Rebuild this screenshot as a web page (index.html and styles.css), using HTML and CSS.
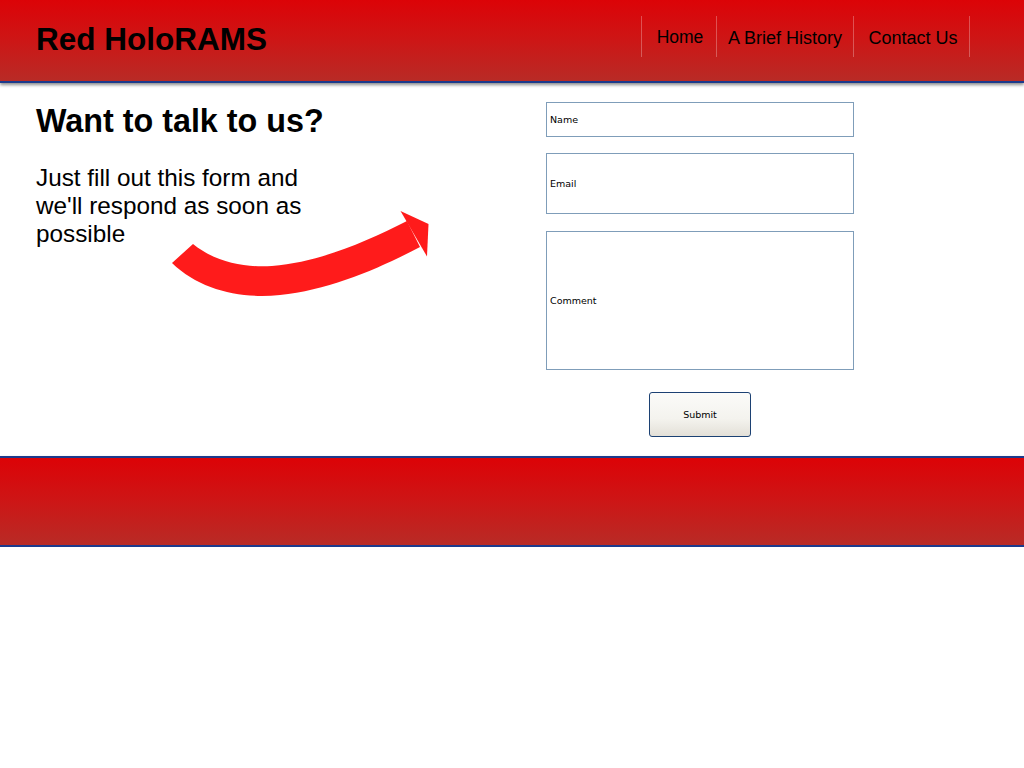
FILE: index.html
```html
<!DOCTYPE html>
<html lang="en">
<head>
<meta charset="utf-8">
<title>Red HoloRAMS - Contact Us</title>
<link rel="stylesheet" href="styles.css">
</head>
<body>
<header class="site-header">
  <h1 class="brand">Red HoloRAMS</h1>
  <nav class="nav">
    <a class="nav-item nav-home" href="#">Home</a>
    <a class="nav-item nav-history" href="#">A Brief History</a>
    <a class="nav-item nav-contact" href="#">Contact Us</a>
  </nav>
</header>
<main class="content">
  <section class="intro">
    <h2 class="intro-title">Want to talk to us?</h2>
    <p class="intro-text">Just fill out this form and we'll respond as soon as possible</p>
    <svg class="arrow" width="280" height="110" viewBox="160 200 280 110" aria-hidden="true">
      <path fill="#ff1b1b" d="M172,263 L193,244 C215,262 245,268 272,266 C320,262 365,242 407,221 L420,247 C380,268 330,290 280,295 C240,299 200,290 172,263 Z"/>
      <path fill="#ff1b1b" d="M400.5,211 L428.5,224 L427,256.5 Z"/>
    </svg>
  </section>
  <form class="contact-form">
    <input class="field field-name" type="text" placeholder="Name">
    <input class="field field-email" type="text" placeholder="Email">
    <input class="field field-comment" type="text" placeholder="Comment">
    <div class="actions">
      <button class="submit" type="button">Submit</button>
    </div>
  </form>
</main>
<footer class="site-footer"></footer>
</body>
</html>
```

FILE: styles.css
```css
* { box-sizing: border-box; }

html, body {
  margin: 0;
  padding: 0;
  background: #ffffff;
}

body {
  font-family: "Liberation Sans", Arial, sans-serif;
  color: #000;
}

.site-header {
  position: relative;
  z-index: 2;
  height: 83px;
  display: flex;
  justify-content: space-between;
  align-items: flex-start;
  padding: 0 54px 0 36px;
  background: linear-gradient(to bottom, #dc0307 0%, #cd1616 50%, #b82b26 100%);
  border-bottom: 2px solid #1c3a8c;
  box-shadow: 0 2px 3px rgba(0, 0, 0, 0.45);
}

.brand {
  margin: 19px 0 0 0;
  font-size: 31.5px;
  line-height: 40px;
  font-weight: bold;
  letter-spacing: 0;
}

.nav {
  display: flex;
  margin-top: 16px;
  border-right: 1px solid rgba(255, 255, 255, 0.28);
}

.nav-item {
  display: block;
  height: 41px;
  padding-top: 3px;
  line-height: 38px;
  font-size: 18px;
  color: #000;
  text-decoration: none;
  text-align: center;
  border-left: 1px solid rgba(255, 255, 255, 0.28);
}

.nav-home { width: 75px; padding-left: 2px; line-height: 36px; font-size: 17.5px; }
.nav-history { width: 137px; }
.nav-contact { width: 116px; padding-left: 3px; }

.content {
  display: flex;
  height: 373px;
  padding: 0 0 0 36px;
}

.intro {
  position: relative;
  width: 510px;
}

.intro-title {
  margin: 21px 0 0 0;
  font-size: 32.3px;
  line-height: 34px;
  font-weight: bold;
}

.intro-text {
  width: 295px;
  margin: 26px 0 0 0;
  font-size: 24.3px;
  line-height: 28px;
}

.arrow {
  position: absolute;
  left: 124px;
  top: 117px;
}

.contact-form {
  width: 308px;
  padding-top: 19px;
  display: flex;
  flex-direction: column;
}

.field {
  display: block;
  width: 308px;
  margin: 0;
  padding: 0 3px;
  border: 1px solid #7f9db9;
  border-radius: 0;
  background: #fff;
  font-family: "DejaVu Sans", Tahoma, sans-serif;
  font-size: 9.5px;
  color: #000;
  outline: none;
}

.field::placeholder {
  color: #000;
  opacity: 1;
}

.field-name { height: 35px; }
.field-email { height: 61px; margin-top: 16px; }
.field-comment { height: 139px; margin-top: 17px; }

.actions {
  display: flex;
  justify-content: center;
  margin-top: 22px;
}

.submit {
  width: 102px;
  height: 45px;
  border: 1px solid #1c4173;
  border-radius: 3px;
  background: linear-gradient(to bottom, #fbfbf9 0%, #f4f3ee 60%, #e3e0d8 100%);
  font-family: "DejaVu Sans", Tahoma, sans-serif;
  font-size: 9.5px;
  color: #000;
  padding: 0;
}

.site-footer {
  height: 91px;
  background: linear-gradient(to bottom, #dc0307 0%, #cd1616 50%, #b82b26 100%);
  border-top: 2px solid #1c3a8c;
  border-bottom: 2px solid #1c3a8c;
  box-shadow: 0 2px 3px rgba(0, 0, 0, 0.45);
}
```
